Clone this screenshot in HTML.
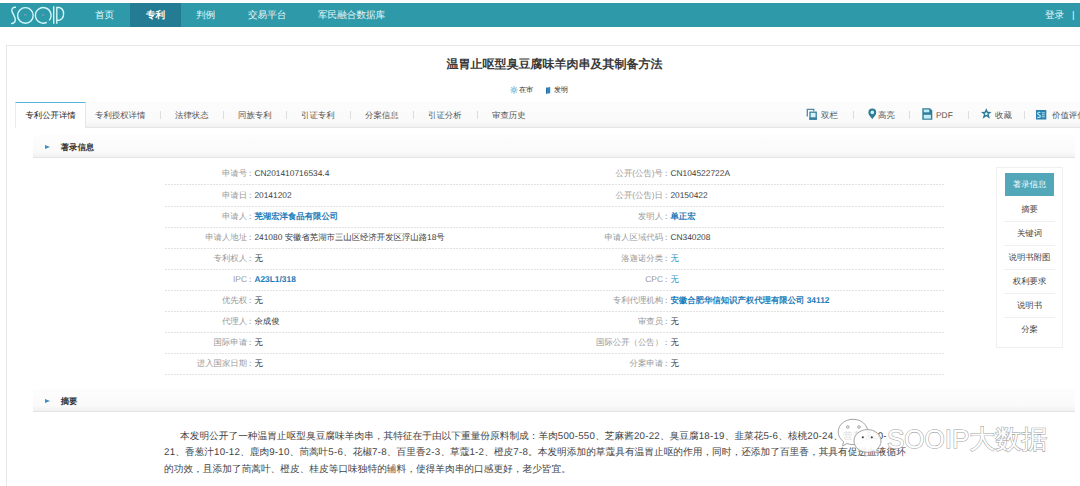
<!DOCTYPE html>
<html><head><meta charset="utf-8">
<style>
*{margin:0;padding:0;box-sizing:border-box}
html,body{width:1080px;height:486px;overflow:hidden;background:#fff;font-family:"Liberation Sans",sans-serif;color:#333;text-rendering:geometricPrecision}
.a{position:absolute;white-space:nowrap}
#nav{position:absolute;left:0;top:3px;width:1080px;height:23.5px;background:#2e9aa9}
#nav .it{position:absolute;top:0;height:23.5px;line-height:26px;font-size:9.6px;color:#eaf7f9;white-space:nowrap}
#nav .act{background:#237c94;font-weight:bold;color:#fff;line-height:25.5px}
#card{position:absolute;left:6px;top:45px;width:1100px;height:460px;border:1px solid #e8e8e8;background:#fff}
#tabbar{position:absolute;left:16px;top:102px;width:1080px;height:26px;background:linear-gradient(#fcfcfc,#fafafa 75%,#f2f2f2);border-bottom:1px solid #e6e6e6}
.tab{position:absolute;white-space:nowrap;top:102px;height:26px;line-height:26px;font-size:8.4px;color:#555}
.tab.act{left:15px;width:71px;background:#fff;border-top:1.7px solid #5db2e2;border-left:1px solid #ececec;border-right:1px solid #e6e6e6;color:#222;text-align:center;height:26px;line-height:24px}
.sep{position:absolute;top:111px;width:1px;height:8px;background:#ddd}
.hdr{position:absolute;left:33px;width:1042px;height:23px;background:linear-gradient(#fdfdfd,#fafafa 75%,#f1f1f1);border-bottom:1px solid #e4e4e4}
.tri{position:absolute;width:0;height:0;border-left:5.3px solid #3a90c2;border-top:2.4px solid transparent;border-bottom:2.4px solid transparent}
.hdr .t{position:absolute;left:27.7px;top:0.8px;line-height:22px;font-size:8.4px;font-weight:bold;color:#333}
.row{position:absolute;left:165px;width:780px;height:22px;border-bottom:1px solid transparent;border-image:repeating-linear-gradient(90deg,#e2e2e2 0 2px,#fff 2px 3px) 0 0 1 0}
.lb{position:absolute;font-size:8.4px;color:#999;text-align:right;line-height:21px}
.vl{position:absolute;font-size:8.4px;color:#3c3c3c;line-height:21px}
.lk{color:#1d7bb8;font-weight:bold}
.ln{color:#3990c6}
#side{position:absolute;left:995.5px;top:167px;width:67.5px;height:181px;border:1px solid #efefef;background:#fff}
.si{position:absolute;left:1005px;width:49px;height:24px;line-height:24px;text-align:center;font-size:8.4px;color:#444}
.sd{position:absolute;left:1004px;width:51px;height:1px;background:#efefef}
.dg{font-weight:normal;letter-spacing:0.25px}
.abl{position:absolute;white-space:nowrap;font-size:9.7px;line-height:16.4px;color:#444}
</style></head><body>
<div id="nav">
  
  <div class="it" style="left:95px">首页</div>
  <div class="it act" style="left:130px;width:51px;text-align:center">专利</div>
  <div class="it" style="left:196px">判例</div>
  <div class="it" style="left:248px">交易平台</div>
  <div class="it" style="left:318px">军民融合数据库</div>
  <div class="it" style="left:1045px">登录</div>
  <div class="it" style="left:1072px">|</div>
</div>
<div id="card"></div>
<svg class="a" style="left:0;top:0" width="70" height="27" viewBox="0 0 70 27" fill="none" stroke="#d4f7fb" stroke-width="1.4">
<path d="M16,7.3 C13.3,7 11.6,8.2 11.8,10.6 C12.1,13.2 15.3,16.3 15.3,19.6 C15.3,22.4 13.6,23.6 11,23.6"/>
<circle cx="25.4" cy="15.4" r="7.8"/>
<path d="M46.79,22.35 A7.8,7.8 0 1 1 49.23,20.41"/>
<path d="M53.7,6.3 V23.8 M56.8,7 V23.8 M56.8,7.2 C61.5,7.2 63.6,10 63.6,13.8 C63.6,17.6 61.5,20.5 56.8,20.5"/>
<path d="M24,14.9 H26.8 M41.8,15 H44.6" stroke="#b9a3c3" stroke-width="0.7"/>
</svg>
<div class="a" style="left:446.5px;top:55.8px;font-size:12px;font-weight:bold;color:#383838">温胃止呕型臭豆腐味羊肉串及其制备方法</div>
<div class="a" style="left:519px;top:86px;font-size:7px;color:#2a2a2a">在审</div>
<div class="a" style="left:554px;top:86px;font-size:7px;color:#2a2a2a">发明</div>
<svg class="a" style="left:509.5px;top:85.75px" width="8" height="8" viewBox="0 0 8 8" stroke="#72b7d9" fill="none"><circle cx="4" cy="4" r="1.4" stroke-width="1"/><path d="M6.10,4.00L7.70,4.00M5.48,5.48L6.62,6.62M4.00,6.10L4.00,7.70M2.52,5.48L1.38,6.62M1.90,4.00L0.30,4.00M2.52,2.52L1.38,1.38M4.00,1.90L4.00,0.30M5.48,2.52L6.62,1.38" stroke-width="1.05"/></svg>
<svg class="a" style="left:546.3px;top:86.8px" width="4.5" height="6.8" viewBox="0 0 4.5 6.8"><path d="M0.2,0.7 L4.2,0 L4.2,6.2 L0.2,6.8Z" fill="#2f84c3"/><path d="M0.4,0.7 L0.4,6.8" stroke="#1d5f92" stroke-width="0.8"/></svg>

<div id="tabbar"></div>
<div class="tab act">专利公开详情</div>
<div class="tab" style="left:95px">专利授权详情</div>
<div class="sep" style="left:160px"></div>
<div class="tab" style="left:175px">法律状态</div>
<div class="sep" style="left:223px"></div>
<div class="tab" style="left:238px">同族专利</div>
<div class="sep" style="left:286px"></div>
<div class="tab" style="left:301px">引证专利</div>
<div class="sep" style="left:350px"></div>
<div class="tab" style="left:365px">分案信息</div>
<div class="sep" style="left:413px"></div>
<div class="tab" style="left:428px">引证分析</div>
<div class="sep" style="left:477px"></div>
<div class="tab" style="left:492px">审查历史</div>

<svg class="a" style="left:806px;top:107.5px" width="11" height="12" viewBox="0 0 11 12" fill="none">
<path d="M1.3,8.6 V1.3 H7.8 V3.2" stroke="#4f8aa5" stroke-width="1.3"/>
<rect x="4" y="4.2" width="6.2" height="7" fill="#d6f2fb" stroke="#3a7f9c" stroke-width="1.3"/>
<rect x="3.4" y="9.3" width="7.4" height="2.3" fill="#3a7f9c"/></svg>
<svg class="a" style="left:867.5px;top:108px" width="9" height="12" viewBox="0 0 9 12">
<path d="M4.3,11.3 C3.8,9.4 0.4,7.6 0.4,4.4 A3.9,3.9 0 0 1 8.2,4.4 C8.2,7.6 4.8,9.4 4.3,11.3Z" fill="#2d7c96"/>
<circle cx="4.3" cy="4.4" r="1.8" fill="#c8f3fc"/></svg>
<svg class="a" style="left:921.5px;top:108px" width="11" height="12" viewBox="0 0 11 12">
<path d="M0.3,0.3 H8 L10.3,2.6 V11.7 H0.3Z" fill="#2f7d98"/>
<rect x="1.7" y="1.5" width="5.6" height="2.8" fill="#bfeaf7"/>
<rect x="1.7" y="6.8" width="7.2" height="3.8" fill="#c6eef9"/></svg>
<svg class="a" style="left:980.5px;top:108px" width="11" height="11" viewBox="0 0 11 11">
<path d="M5.3,0.2 L6.9,3.7 L10.6,3.9 L7.7,6.3 L8.9,10.8 L5.3,8.3 L1.7,10.8 L2.9,6.3 L0,3.9 L3.7,3.7Z" fill="#2b7995"/>
<path d="M5.3,3.8 L6,5.1 L7.3,5.2 L6.3,6.1 L6.6,7.5 L5.3,6.8 L4,7.5 L4.3,6.1 L3.3,5.2 L4.6,5.1Z" fill="#c9f2fb"/></svg>
<svg class="a" style="left:1036px;top:109.5px" width="11" height="10" viewBox="0 0 11 10">
<rect x="0" y="0" width="10.3" height="9.5" fill="#2a82ad"/>
<path d="M4.4,2.6 C3.6,2 1.6,2.1 1.6,3.6 C1.6,5 4.3,4.6 4.3,6.2 C4.3,7.6 2.3,7.7 1.4,7" stroke="#bfefff" stroke-width="1.1" fill="none"/>
<path d="M5.8,2.8H8.8M5.8,4.8H8.8M5.8,6.8H8.8" stroke="#bfefff" stroke-width="0.9"/></svg>
<div class="tab" style="left:821px">双栏</div>
<div class="sep" style="left:853px"></div>
<div class="tab" style="left:878px">高亮</div>
<div class="sep" style="left:909px"></div>
<div class="tab" style="left:936px">PDF</div>
<div class="sep" style="left:968px"></div>
<div class="tab" style="left:995px">收藏</div>
<div class="sep" style="left:1024px"></div>
<div class="tab" style="left:1052px">价值评估</div>

<div class="hdr" style="top:135px"><div class="tri" style="left:11.7px;top:9.6px"></div><div class="t">著录信息</div></div>
<!--ROWS-->
<div class="row" style="top:163.4px"></div>
<div class="lb" style="right:833px;top:163.4px">申请号</div><div class="lb" style="left:246px;top:163.4px">：</div>
<div class="vl" style="left:246px;top:163.4px"><span style="visibility:hidden">：</span><span>CN201410716534.4</span></div>
<div class="lb" style="right:417px;top:163.4px">公开(公告)号</div><div class="lb" style="left:662px;top:163.4px">：</div>
<div class="vl" style="left:662px;top:163.4px"><span style="visibility:hidden">：</span><span>CN104522722A</span></div>
<div class="row" style="top:184.5px"></div>
<div class="lb" style="right:833px;top:184.5px">申请日</div><div class="lb" style="left:246px;top:184.5px">：</div>
<div class="vl" style="left:246px;top:184.5px"><span style="visibility:hidden">：</span><span>20141202</span></div>
<div class="lb" style="right:417px;top:184.5px">公开(公告)日</div><div class="lb" style="left:662px;top:184.5px">：</div>
<div class="vl" style="left:662px;top:184.5px"><span style="visibility:hidden">：</span><span>20150422</span></div>
<div class="row" style="top:205.6px"></div>
<div class="lb" style="right:833px;top:205.6px">申请人</div><div class="lb" style="left:246px;top:205.6px">：</div>
<div class="vl" style="left:246px;top:205.6px"><span style="visibility:hidden">：</span><span class=lk>芜湖宏洋食品有限公司</span></div>
<div class="lb" style="right:417px;top:205.6px">发明人</div><div class="lb" style="left:662px;top:205.6px">：</div>
<div class="vl" style="left:662px;top:205.6px"><span style="visibility:hidden">：</span><span class=lk>单正宏</span></div>
<div class="row" style="top:226.6px"></div>
<div class="lb" style="right:833px;top:226.6px">申请人地址</div><div class="lb" style="left:246px;top:226.6px">：</div>
<div class="vl" style="left:246px;top:226.6px"><span style="visibility:hidden">：</span><span>241080 安徽省芜湖市三山区经济开发区浮山路18号</span></div>
<div class="lb" style="right:417px;top:226.6px">申请人区域代码</div><div class="lb" style="left:662px;top:226.6px">：</div>
<div class="vl" style="left:662px;top:226.6px"><span style="visibility:hidden">：</span><span>CN340208</span></div>
<div class="row" style="top:247.7px"></div>
<div class="lb" style="right:833px;top:247.7px">专利权人</div><div class="lb" style="left:246px;top:247.7px">：</div>
<div class="vl" style="left:246px;top:247.7px"><span style="visibility:hidden">：</span><span>无</span></div>
<div class="lb" style="right:417px;top:247.7px">洛迦诺分类</div><div class="lb" style="left:662px;top:247.7px">：</div>
<div class="vl" style="left:662px;top:247.7px"><span style="visibility:hidden">：</span><span class=ln>无</span></div>
<div class="row" style="top:268.8px"></div>
<div class="lb" style="right:833px;top:268.8px">IPC</div><div class="lb" style="left:246px;top:268.8px">：</div>
<div class="vl" style="left:246px;top:268.8px"><span style="visibility:hidden">：</span><span class=lk>A23L1/318</span></div>
<div class="lb" style="right:417px;top:268.8px">CPC</div><div class="lb" style="left:662px;top:268.8px">：</div>
<div class="vl" style="left:662px;top:268.8px"><span style="visibility:hidden">：</span><span class=ln>无</span></div>
<div class="row" style="top:289.9px"></div>
<div class="lb" style="right:833px;top:289.9px">优先权</div><div class="lb" style="left:246px;top:289.9px">：</div>
<div class="vl" style="left:246px;top:289.9px"><span style="visibility:hidden">：</span><span>无</span></div>
<div class="lb" style="right:417px;top:289.9px">专利代理机构</div><div class="lb" style="left:662px;top:289.9px">：</div>
<div class="vl" style="left:662px;top:289.9px"><span style="visibility:hidden">：</span><span class=lk>安徽合肥华信知识产权代理有限公司 34112</span></div>
<div class="row" style="top:311.0px"></div>
<div class="lb" style="right:833px;top:311.0px">代理人</div><div class="lb" style="left:246px;top:311.0px">：</div>
<div class="vl" style="left:246px;top:311.0px"><span style="visibility:hidden">：</span><span>余成俊</span></div>
<div class="lb" style="right:417px;top:311.0px">审查员</div><div class="lb" style="left:662px;top:311.0px">：</div>
<div class="vl" style="left:662px;top:311.0px"><span style="visibility:hidden">：</span><span>无</span></div>
<div class="row" style="top:332.0px"></div>
<div class="lb" style="right:833px;top:332.0px">国际申请</div><div class="lb" style="left:246px;top:332.0px">：</div>
<div class="vl" style="left:246px;top:332.0px"><span style="visibility:hidden">：</span><span>无</span></div>
<div class="lb" style="right:417px;top:332.0px">国际公开（公告）</div><div class="lb" style="left:662px;top:332.0px">：</div>
<div class="vl" style="left:662px;top:332.0px"><span style="visibility:hidden">：</span><span>无</span></div>
<div class="row" style="top:353.1px"></div>
<div class="lb" style="right:833px;top:353.1px">进入国家日期</div><div class="lb" style="left:246px;top:353.1px">：</div>
<div class="vl" style="left:246px;top:353.1px"><span style="visibility:hidden">：</span><span>无</span></div>
<div class="lb" style="right:417px;top:353.1px">分案申请</div><div class="lb" style="left:662px;top:353.1px">：</div>
<div class="vl" style="left:662px;top:353.1px"><span style="visibility:hidden">：</span><span>无</span></div>
<!--/ROWS-->

<div id="side"></div>
<div class="si" style="top:173.3px;background:#52a7b8;color:#fff;height:23.2px;line-height:23.2px">著录信息</div>
<div class="si" style="top:197px">摘要</div>
<div class="sd" style="top:221px"></div>
<div class="si" style="top:221px">关键词</div>
<div class="sd" style="top:245px"></div>
<div class="si" style="top:245px">说明书附图</div>
<div class="sd" style="top:269px"></div>
<div class="si" style="top:269px">权利要求</div>
<div class="sd" style="top:293px"></div>
<div class="si" style="top:293px">说明书</div>
<div class="sd" style="top:317px"></div>
<div class="si" style="top:317px">分案</div>

<div class="hdr" style="top:389px"><div class="tri" style="left:11.7px;top:9.6px"></div><div class="t">摘要</div></div>
<div class="abl" style="left:180px;top:428.5px">本发明公开了一种温胃止呕型臭豆腐味羊肉串，其特征在于由以下重量份原料制成：羊肉<b class="dg">500-550</b>、芝麻酱<b class="dg">20-22</b>、臭豆腐<b class="dg">18-19</b>、韭菜花<b class="dg">5-6</b>、核桃<b class="dg">20-24</b>、营养液<b class="dg">20-</b></div>
<div class="abl" style="left:164px;top:445px"><b class="dg">21</b>、香葱汁<b class="dg">10-12</b>、鹿肉<b class="dg">9-10</b>、茼蒿叶<b class="dg">5-6</b>、花椒<b class="dg">7-8</b>、百里香<b class="dg">2-3</b>、草蔻<b class="dg">1-2</b>、橙皮<b class="dg">7-8</b>。本发明添加的草蔻具有温胃止呕的作用，同时，还添加了百里香，其具有促进血液循环</div>
<div class="abl" style="left:164px;top:461.5px">的功效，且添加了茼蒿叶、橙皮、桂皮等口味独特的辅料，使得羊肉串的口感更好，老少皆宜。</div>
<!--WM-->
<svg class="a" style="left:830px;top:410px" width="230" height="50" viewBox="0 0 230 50">
<g fill="rgba(255,255,255,0.8)" stroke="#9a9a9a" stroke-width="0.9">
<path d="M23,9.3 C31.5,9.3 37.8,15 37.8,22 C37.8,29 31.5,34.6 23,34.6 C20.8,34.6 18.8,34.2 17,33.5 L12.6,36 L13.6,31.6 C10.2,29.3 8.2,25.9 8.2,22 C8.2,15 14.5,9.3 23,9.3Z"/>
<circle cx="17.8" cy="17" r="1.3" fill="#fff"/><circle cx="29" cy="17" r="1.3" fill="#fff"/>
<path d="M37.5,19.6 C45,19.6 51,24.6 51,31 C51,34.4 49.3,37.4 46.6,39.5 L47.6,43.4 L43.6,41.2 C41.8,41.9 39.7,42.3 37.5,42.3 C30,42.3 24,37.3 24,31 C24,24.6 30,19.6 37.5,19.6Z" fill="rgba(255,255,255,0.9)"/>
<circle cx="32.8" cy="27.3" r="1.1" fill="#444" stroke="none"/><circle cx="41.8" cy="27.3" r="1.1" fill="#444" stroke="none"/>
</g>
<text x="57" y="37.8" font-size="26" font-family="Liberation Sans" font-weight="300" fill="#fff" stroke="#a3a3a3" stroke-width="1.1" paint-order="stroke" style="text-rendering:geometricPrecision">SOOIP大数据</text>
</svg>
<!--/WM-->
</body></html>
